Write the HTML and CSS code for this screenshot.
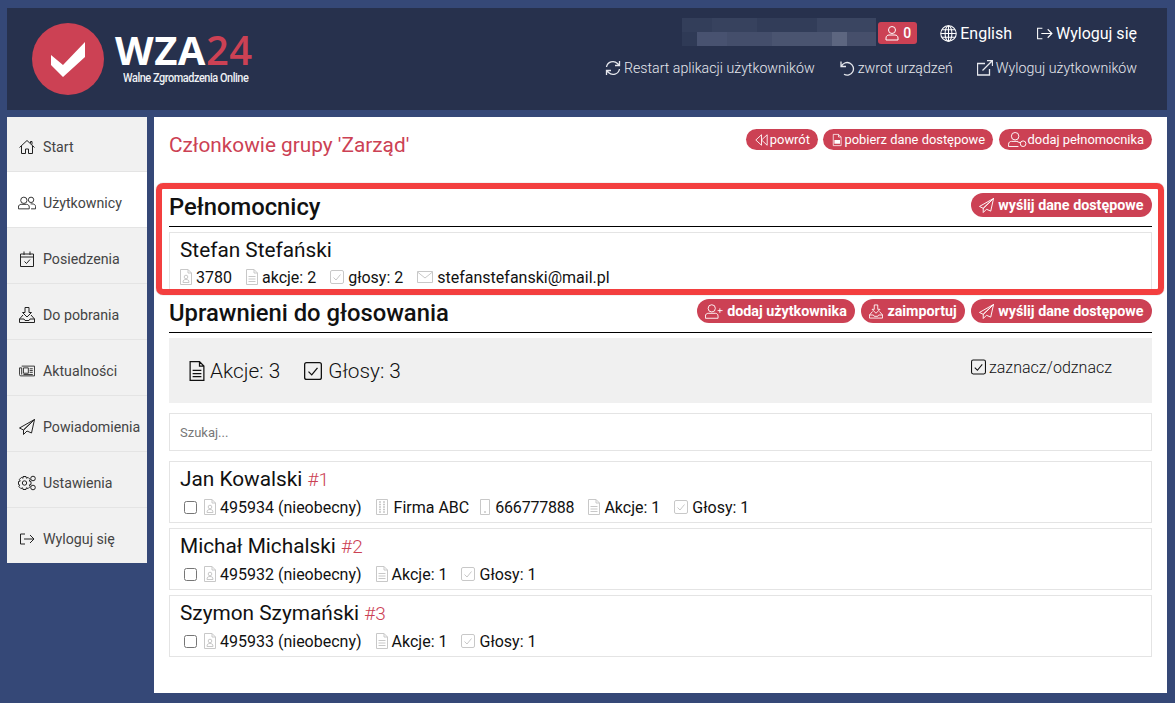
FILE: index.html
```html
<!DOCTYPE html>
<html lang="pl">
<head>
<meta charset="UTF-8">
<meta name="viewport" content="width=device-width, initial-scale=1.0">
<title>WZA24 - Członkowie grupy</title>
<link rel="stylesheet" href="styles.css">
</head>
<body>

<svg class="iconDefs" xmlns="http://www.w3.org/2000/svg">
    <symbol id="i-home" viewBox="0 0 16 16"><path d="M.5 8.500 8 1.500l7.500 7M2.500 7v7.500h4v-4.500h3v4.500h4V7M11.500 4V2.500H13v3"/></symbol>
    <symbol id="i-users" viewBox="0 0 20 16"><circle cx="6.500" cy="5" r="3.500"/><path d="M.5 14.500v-2c0-2 1.500-3 3-3h6c1.500 0 3 1 3 3v2z"/><circle cx="14.500" cy="4.500" r="3"/><path d="M14 9h1.500c2.500 0 4 1 4 3v2.500h-5"/></symbol>
    <symbol id="i-calendar" viewBox="0 0 16 16"><path d="M1.500 3h13v12.500h-13zM1.500 6h13M5 .5V4M11 .5V4M5.500 10.500l2 2 3.500-4"/></symbol>
    <symbol id="i-import" viewBox="0 0 16 16"><path d="M6 .5h4v5h2.500L8 10 3.500 5.500H6zM4 8 .5 12v3.500h15V12L12 8M.5 12h4.500l1 1.500h4l1-1.500h4.500"/></symbol>
    <symbol id="i-news" viewBox="0 0 18 16"><path d="M3 2.500h14.500v11H2c-.9 0-1.500-.6-1.500-1.500V4.500H3V12M5 4.500h5.500v6H5zM12 5.500h3.500M12 7.500h3.500M12 9.500h3.500M5 12h10.500"/></symbol>
    <symbol id="i-send" viewBox="0 0 16 16"><path d="M15.500.5.500 9l4 2zM15.500.5 4.500 11v4.500l3.500-3.500M15.500.5l-3 13.500L8 12"/></symbol>
    <symbol id="i-cogs" viewBox="0 0 18 16"><circle cx="6.500" cy="8" r="2.200"/><path d="M5 2.500h3l.4 1.700 1.700-.8 2 2-.8 1.700 1.700.4v3l-1.700.4.800 1.700-2 2-1.700-.8L8 15.500H5l-.4-1.700-1.700.8-2-2 .8-1.700L.5 10.500v-3l1.700-.4-.8-1.700 2-2 1.700.8z" transform="translate(0 -1)"/><circle cx="15" cy="3.500" r="2.300"/><circle cx="15" cy="12.500" r="2.300"/></symbol>
    <symbol id="i-logout" viewBox="0 0 16 16"><path d="M6 3H1.500v10H6M5 8h10M11 4l4 4-4 4"/></symbol>
    <symbol id="i-user" viewBox="0 0 16 16"><circle cx="8" cy="5" r="3.500"/><path d="M2 15v-2c0-2 1.500-3 3-3h6c1.500 0 3 1 3 3v2z"/></symbol>
    <symbol id="i-globe" viewBox="0 0 16 16"><circle cx="8" cy="8" r="7.300"/><ellipse cx="8" cy="8" rx="3.200" ry="7.300"/><path d="M8 1v14M1 8h14M2 4.500h12M2 11.500h12"/></symbol>
    <symbol id="i-sync" viewBox="0 0 16 16"><path d="M1.500 7a6.500 6.500 0 0 1 11-3.500L14.500 5.500M14.500 1v4.500H10M14.500 9a6.500 6.500 0 0 1-11 3.500L1.500 10.500M1.500 15v-4.500H6"/></symbol>
    <symbol id="i-undo" viewBox="0 0 16 16"><path d="M2 1.500v5h5M2.300 6.500A6.300 6.300 0 1 1 5 14.300"/></symbol>
    <symbol id="i-external" viewBox="0 0 16 16"><path d="M12.500 9v6H.5V3.500H8M5.500 10.500l10-10M10 .5h5.500V6"/></symbol>
    <symbol id="i-rewind" viewBox="0 0 16 16"><path d="M8 2 1.500 8 8 14zM14.500 2 8 8l6.500 6z"/></symbol>
    <symbol id="i-csv" viewBox="0 0 16 16"><path d="M3 .5h7l3.500 3.500v11.500H3zM10 .5V4h3.500"/><path class="solid" d="M4.500 8h7.500v5H4.500z"/></symbol>
    <symbol id="i-proxy" viewBox="0 0 20 16"><circle cx="8" cy="4.500" r="4"/><path d="M1 15.500v-2.500c0-2 1.500-3 3-3h7M1 15.500h10.500"/><circle cx="16.500" cy="12.500" r="3"/><path d="M10.500 10.500l3.500 1"/></symbol>
    <symbol id="i-useradd" viewBox="0 0 20 16"><circle cx="7.500" cy="4.500" r="4"/><path d="M.5 15.500V13c0-2 1.500-3 3-3h8c1.500 0 3 1 3 3v2.500zM16.500 4.500v5M14 7h5.500"/></symbol>
    <symbol id="i-doc" viewBox="0 0 12 16"><path d="M.5.500h7.500l3.500 3.500v11.500H.5zM8 .5V4h3.500M2.500 7.500h7M2.500 10h7M2.500 12.500h7"/></symbol>
    <symbol id="i-check" viewBox="0 0 14 14"><rect x=".5" y=".5" width="13" height="13" rx="1.500"/><path d="M3.500 7.500 6 10l4.500-5.500"/></symbol>
    <symbol id="i-userdoc" viewBox="0 0 12 16"><path d="M.5.500h7.500l3.500 3.500v11.500H.5zM8 .5V4h3.500"/><circle cx="6" cy="8" r="1.800"/><path d="M3 13.500c0-2.500 1.200-3 3-3s3 .5 3 3z"/></symbol>
    <symbol id="i-mail" viewBox="0 0 16 12"><path d="M.5.500h15v11H.5zM.5 1l7.500 6 7.500-6"/></symbol>
    <symbol id="i-building" viewBox="0 0 12 16"><path d="M.5.500h11v15H.5z"/><path class="thick" d="M3 3h2M7 3h2M3 5.500h2M7 5.500h2M3 8h2M7 8h2M3 10.500h2M7 10.500h2M3 13h2M7 13h2"/></symbol>
    <symbol id="i-phone" viewBox="0 0 10 16"><path d="M.5.500h9v15h-9z"/><path class="thick" d="M4 13h2"/></symbol>
</svg>

<header class="topBar">
    <div class="logo">
        <svg class="logoMark" viewBox="0 0 72 72"><circle cx="36" cy="36" r="36" fill="#cc4154"/><path d="M19 32l12 10 22-23v15L31 54 19 42z" fill="#fff"/></svg>
        <div class="logoText">
            <div class="logoName">WZA<span class="logoNum">24</span></div>
            <div class="logoSub">Walne Zgromadzenia Online</div>
        </div>
    </div>
    <div class="topLinks">
        <div class="topRow">
            <div class="blurredName"></div>
            <span class="userBadge"><svg class="icon"><use href="#i-user"/></svg>0</span>
            <a class="topLink"><svg class="icon icon17"><use href="#i-globe"/></svg>English</a>
            <a class="topLink"><svg class="icon icon17"><use href="#i-logout"/></svg>Wyloguj się</a>
        </div>
        <div class="subRow">
            <a class="subLink"><svg class="icon"><use href="#i-sync"/></svg>Restart aplikacji użytkowników</a>
            <a class="subLink"><svg class="icon"><use href="#i-undo"/></svg>zwrot urządzeń</a>
            <a class="subLink"><svg class="icon"><use href="#i-external"/></svg>Wyloguj użytkowników</a>
        </div>
    </div>
</header>

<div class="layout">
    <nav class="sideNav">
        <a class="navItem"><svg class="icon"><use href="#i-home"/></svg>Start</a>
        <a class="navItem active"><svg class="icon navWide"><use href="#i-users"/></svg>Użytkownicy</a>
        <a class="navItem"><svg class="icon"><use href="#i-calendar"/></svg>Posiedzenia</a>
        <a class="navItem"><svg class="icon"><use href="#i-import"/></svg>Do pobrania</a>
        <a class="navItem"><svg class="icon"><use href="#i-news"/></svg>Aktualności</a>
        <a class="navItem"><svg class="icon"><use href="#i-send"/></svg>Powiadomienia</a>
        <a class="navItem"><svg class="icon navWide"><use href="#i-cogs"/></svg>Ustawienia</a>
        <a class="navItem"><svg class="icon"><use href="#i-logout"/></svg>Wyloguj się</a>
    </nav>

    <main class="content">
        <div class="pageHead">
            <h1>Członkowie grupy 'Zarząd'</h1>
            <div class="btnRow">
                <a class="pill"><svg class="icon rewind"><use href="#i-rewind"/></svg>powrót</a>
                <a class="pill"><svg class="icon csv"><use href="#i-csv"/></svg>pobierz dane dostępowe</a>
                <a class="pill"><svg class="icon icon20"><use href="#i-proxy"/></svg>dodaj pełnomocnika</a>
            </div>
        </div>

        <section class="proxySection">
            <div class="highlight"></div>
            <div class="sectionHead">
                <h2>Pełnomocnicy</h2>
                <div class="btnRow">
                    <a class="pill strong"><svg class="icon"><use href="#i-send"/></svg>wyślij dane dostępowe</a>
                </div>
            </div>
            <div class="card proxyCard">
                <div class="cardName">Stefan Stefański</div>
                <div class="meta">
                    <span class="metaItem"><svg class="icon faint w12"><use href="#i-userdoc"/></svg>3780</span>
                    <span class="metaItem"><svg class="icon faint w12"><use href="#i-doc"/></svg>akcje: 2</span>
                    <span class="metaItem"><svg class="icon faint w14"><use href="#i-check"/></svg>głosy: 2</span>
                    <span class="metaItem"><svg class="icon faint"><use href="#i-mail"/></svg>stefanstefanski@mail.pl</span>
                </div>
            </div>
        </section>

        <section>
            <div class="sectionHead">
                <h2>Uprawnieni do głosowania</h2>
                <div class="btnRow">
                    <a class="pill strong"><svg class="icon icon20"><use href="#i-useradd"/></svg>dodaj użytkownika</a>
                    <a class="pill strong"><svg class="icon narrow"><use href="#i-import"/></svg>zaimportuj</a>
                    <a class="pill strong"><svg class="icon"><use href="#i-send"/></svg>wyślij dane dostępowe</a>
                </div>
            </div>
            <div class="summary">
                <div class="totals">
                    <span class="total"><svg class="icon totalDoc"><use href="#i-doc"/></svg>Akcje: 3</span>
                    <span class="total"><svg class="icon totalCheck"><use href="#i-check"/></svg>Głosy: 3</span>
                </div>
                <a class="toggleAll"><svg class="icon w15"><use href="#i-check"/></svg>zaznacz/odznacz</a>
            </div>
            <input class="search" type="text" placeholder="Szukaj...">

            <div class="card">
                <div class="cardName">Jan Kowalski <span class="cardNum">#1</span></div>
                <div class="meta">
                    <input class="pick" type="checkbox">
                    <span class="metaItem"><svg class="icon faint w12"><use href="#i-userdoc"/></svg>495934 (nieobecny)</span>
                    <span class="metaItem company"><svg class="icon faint w12"><use href="#i-building"/></svg>Firma ABC</span>
                    <span class="metaItem phone"><svg class="icon faint w10"><use href="#i-phone"/></svg>666777888</span>
                    <span class="metaItem"><svg class="icon faint w12"><use href="#i-doc"/></svg>Akcje: 1</span>
                    <span class="metaItem"><svg class="icon faint w14"><use href="#i-check"/></svg>Głosy: 1</span>
                </div>
            </div>
            <div class="card">
                <div class="cardName">Michał Michalski <span class="cardNum">#2</span></div>
                <div class="meta">
                    <input class="pick" type="checkbox">
                    <span class="metaItem"><svg class="icon faint w12"><use href="#i-userdoc"/></svg>495932 (nieobecny)</span>
                    <span class="metaItem"><svg class="icon faint w12"><use href="#i-doc"/></svg>Akcje: 1</span>
                    <span class="metaItem"><svg class="icon faint w14"><use href="#i-check"/></svg>Głosy: 1</span>
                </div>
            </div>
            <div class="card">
                <div class="cardName">Szymon Szymański <span class="cardNum">#3</span></div>
                <div class="meta">
                    <input class="pick" type="checkbox">
                    <span class="metaItem"><svg class="icon faint w12"><use href="#i-userdoc"/></svg>495933 (nieobecny)</span>
                    <span class="metaItem"><svg class="icon faint w12"><use href="#i-doc"/></svg>Akcje: 1</span>
                    <span class="metaItem"><svg class="icon faint w14"><use href="#i-check"/></svg>Głosy: 1</span>
                </div>
            </div>
        </section>
    </main>
</div>

</body>
</html>
```

FILE: styles.css
```css
/* Overall Style */
html, body {
    height: 703px;
    overflow: hidden;
}
body {
    margin: 0;
    padding: 8px 8px 0 7px;
    box-sizing: border-box;
    background: #354877;
    font-family: Roboto, Arial, sans-serif;
    color: #111;
}
a {
    text-decoration: none;
    color: inherit;
}
.iconDefs {
    position: absolute;
    width: 0;
    height: 0;
}
.icon {
    width: 16px;
    height: 16px;
    flex: none;
    fill: none;
    stroke: currentColor;
    stroke-width: 1;
}
.solid {
    fill: currentColor;
    stroke: none;
}
.thick {
    stroke-width: 1.5;
}
.w10 { width: 10px; }
.w12 { width: 12px; }
.w14 { width: 14px; }
.w15 { width: 15px; }
.icon17 { width: 17px; height: 17px; }

/* Header */
.topBar {
    display: flex;
    justify-content: space-between;
    height: 102px;
    padding: 11px 30px 0 25px;
    box-sizing: border-box;
    background: #27314d;
    color: #fff;
}
.logo {
    display: flex;
    align-items: flex-start;
    gap: 11px;
    padding-top: 4px;
}
.logoMark {
    width: 72px;
    height: 72px;
}
.logoName {
    font-family: "Open Sans", sans-serif;
    font-weight: 700;
    font-size: 40px;
    line-height: 42px;
    margin-top: 6px;
    letter-spacing: 0.5px;
}
.logoNum {
    color: #cc4154;
    font-weight: 600;
}
.logoSub {
    width: 138px;
    font-size: 12px;
    font-weight: 500;
    line-height: 14px;
    margin-left: 8px;
    letter-spacing: -0.5px;
    white-space: nowrap;
    transform: scaleX(0.91);
    transform-origin: left;
    color: #eef0f4;
}
.topLinks {
    display: flex;
    flex-direction: column;
    align-items: flex-end;
    gap: 13px;
}
.topRow {
    display: flex;
    align-items: center;
    height: 28px;
    font-size: 16px;
}
.blurredName {
    width: 194px;
    height: 28px;
    margin-top: -2px;
    margin-right: 2px;
    background:
        linear-gradient(90deg, #2f3a56 15px, #485270 15px 45px, #444e6b 45px 90px, #4a5470 90px 150px, #5d6680 150px 165px, #464f6b 165px 194px) 0 100% / 100% 14px no-repeat,
        linear-gradient(90deg, #333e5a 30px, #37425e 30px 75px, #323d59 75px 135px, #3a4561 135px 194px) 0 0 / 100% 14px no-repeat;
}
.userBadge {
    display: flex;
    align-items: center;
    gap: 3px;
    width: 39px;
    height: 22px;
    margin-right: 23px;
    padding-left: 6px;
    box-sizing: border-box;
    border-radius: 3px;
    background: #cc4154;
    font-size: 14px;
    font-weight: 500;
}
.topLink {
    display: flex;
    align-items: center;
    gap: 3px;
    margin-left: 24px;
}
.userBadge + .topLink {
    margin-left: 0;
}
.subRow {
    display: flex;
    gap: 24px;
    font-size: 14.2px;
    font-weight: 300;
}
.subLink {
    display: flex;
    align-items: center;
    gap: 3px;
    color: #e6e8ee;
}
.subLink .icon {
    stroke-width: 1.3;
}

/* Side menu */
.layout {
    display: flex;
    align-items: flex-start;
    gap: 7px;
    margin-top: 7px;
}
.sideNav {
    width: 140px;
    flex: none;
}
.navItem {
    display: flex;
    align-items: center;
    gap: 8px;
    height: 56px;
    padding: 6px 0 0 12px;
    box-sizing: border-box;
    background: #f1f1f1;
    border-bottom: 1px solid #e4e4e4;
    font-size: 14.2px;
    color: #444;
}
.navItem:first-child {
    height: 55px;
}
.navItem:last-child {
    height: 55px;
    border-bottom: none;
}
.navItem .icon {
    color: #222;
}
.navItem .navWide {
    width: 18px;
    margin-left: -1px;
    margin-right: -1px;
}
.navItem.active {
    background: #fff;
}

/* Main panel */
.content {
    flex: 1;
    height: 576px;
    padding: 12px 15px 0;
    box-sizing: border-box;
    background: #fff;
}
.pageHead {
    display: flex;
    justify-content: space-between;
    align-items: flex-start;
    height: 55px;
}
h1 {
    margin: 4px 0 0;
    font-size: 20.8px;
    font-weight: 400;
    line-height: 24px;
    color: #cc4154;
}
.btnRow {
    display: flex;
    gap: 5.5px;
}
.sectionHead .btnRow {
    gap: 6px;
}
.pill {
    display: flex;
    align-items: center;
    gap: 1px;
    height: 21px;
    padding: 0 8px;
    border-radius: 11px;
    background: #cc4154;
    color: #fff;
    font-size: 12.9px;
    white-space: nowrap;
}
.pill .icon {
    width: 14px;
    height: 14px;
}
.pill .rewind {
    width: 15px;
}
.pill .csv {
    width: 12px;
}
.pill .icon20 {
    width: 20px;
    height: 15px;
}
.pill.strong {
    height: 24px;
    gap: 4px;
    padding: 0 8.5px 0 8px;
    border-radius: 12px;
    font-size: 14.3px;
    font-weight: 700;
}
.pill.strong .icon {
    width: 15px;
    height: 15px;
}
.pill.strong .narrow {
    width: 14px;
}
.pill.strong .icon20 {
    width: 18px;
}

/* Sections */
.proxySection {
    position: relative;
    height: 106px;
}
.highlight {
    position: absolute;
    z-index: 1;
    left: -13px;
    right: -12px;
    top: -1px;
    height: 112px;
    box-sizing: border-box;
    border: 6px solid #f33f3f;
    border-radius: 7px;
    box-shadow: 0 0 1px #888;
}
.sectionHead {
    display: flex;
    justify-content: space-between;
    align-items: flex-start;
    height: 43px;
    padding-top: 9px;
    box-sizing: border-box;
    border-bottom: 1px solid #000;
}
h2 {
    margin: 0;
    font-size: 23.8px;
    font-weight: 500;
    line-height: 28px;
    color: #111;
}
.card {
    height: 62px;
    margin-bottom: 5px;
    padding: 4px 10px 0;
    box-sizing: border-box;
    border: 1px solid #e4e4e4;
}
.proxyCard {
    height: 60px;
    margin-top: 5px;
    margin-bottom: 0;
}
.cardName {
    font-size: 20.8px;
    line-height: 26px;
    color: #111;
}
.cardNum {
    color: #cc4154;
    font-size: 19px;
    font-weight: 300;
}
.meta {
    display: flex;
    align-items: center;
    gap: 14px;
    height: 26px;
    margin-top: 1px;
    font-size: 16px;
}
.metaItem {
    display: flex;
    align-items: center;
    gap: 4px;
}
.company {
    gap: 6px;
}
.phone {
    gap: 5px;
    margin-left: -3px;
    letter-spacing: -0.2px;
}
.faint {
    color: #c8c8c8;
}
.pick {
    width: 13px;
    height: 13px;
    margin: 0 -7px 0 4px;
}

/* Summary bar and search */
.summary {
    display: flex;
    justify-content: space-between;
    align-items: center;
    height: 65px;
    margin-top: 5px;
    padding: 0 40px 0 20px;
    background: #f0f0f0;
}
.totals {
    display: flex;
    gap: 24px;
}
.total {
    display: flex;
    align-items: center;
    gap: 5px;
    font-size: 20.8px;
    font-weight: 300;
}
.total .totalDoc {
    width: 16px;
    height: 20px;
}
.total .totalCheck {
    width: 18px;
    height: 18px;
    margin-right: 1px;
}
.toggleAll {
    display: flex;
    align-items: center;
    gap: 3px;
    margin-top: -7px;
    font-size: 16px;
    font-weight: 300;
}
.search {
    display: block;
    width: 100%;
    height: 38px;
    margin: 10px 0;
    padding: 0 10px;
    box-sizing: border-box;
    border: 1px solid #e4e4e4;
    outline: none;
    font-family: Roboto, Arial, sans-serif;
    font-size: 13px;
}
.search::placeholder {
    color: #777;
}
```
